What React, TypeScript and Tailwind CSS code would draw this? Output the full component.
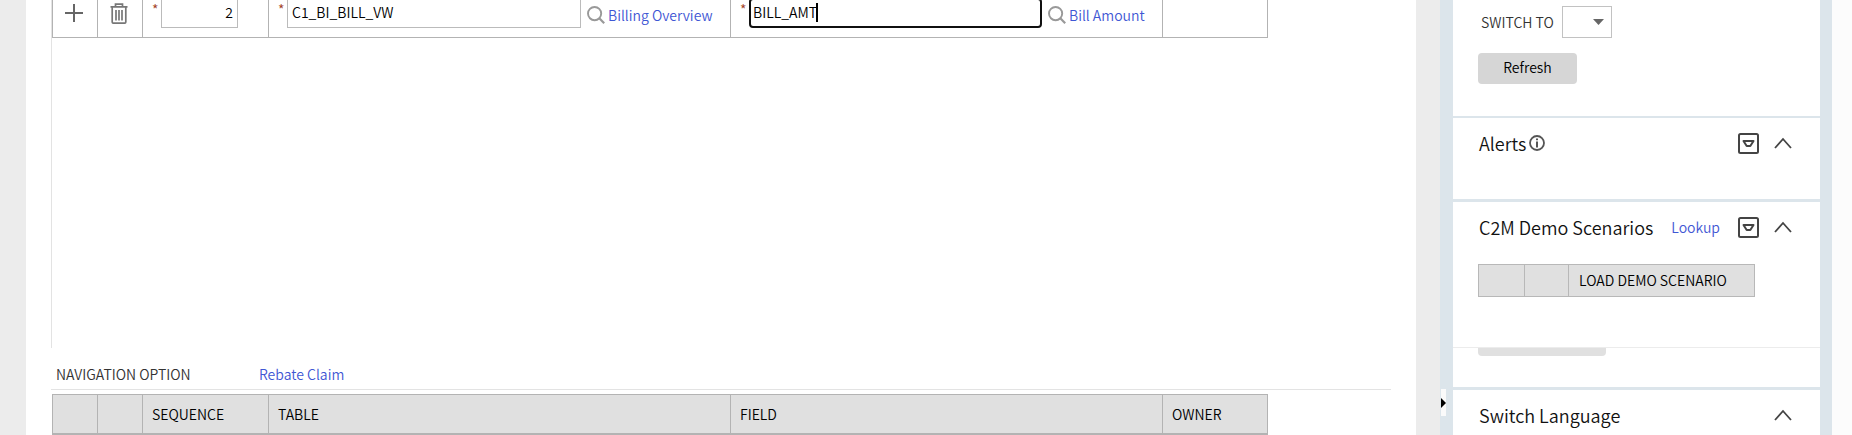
import type { ReactNode } from "react";

const headings = ["", "", "SEQUENCE", "TABLE", "FIELD", "OWNER"];

function Columns() {
  return (
    <colgroup>
      <col className="w-[45px]" />
      <col className="w-[45px]" />
      <col className="w-[126px]" />
      <col className="w-[462px]" />
      <col className="w-[432px]" />
      <col className="w-[105px]" />
    </colgroup>
  );
}

function SearchIcon() {
  return (
    <svg viewBox="0 0 18 18" className="size-[18px]" fill="none" stroke="#999" aria-hidden="true">
      <circle cx="7.6" cy="7.6" r="6.6" strokeWidth="1.9" />
      <path d="M12.3 12.3 17.2 17.2" strokeWidth="2.2" />
    </svg>
  );
}

function Lookup({ label, text }: { label: string; text: string }) {
  return (
    <>
      <button aria-label={label} className="ml-1.5 mt-1">
        <SearchIcon />
      </button>
      <a href="#" className="ml-[3px] mt-1 text-[#3f57d4]">
        {text}
      </a>
    </>
  );
}

function Star() {
  return <span className="w-[9px] shrink-0 self-start pt-px text-[#a03c1e]">*</span>;
}

function Chevron() {
  return (
    <svg viewBox="0 0 18 12" className="h-3 w-[18px]" fill="none" stroke="#444" strokeWidth="1.8" aria-hidden="true">
      <path d="M1 11 9 2l8 9" />
    </svg>
  );
}

function MenuIcon() {
  return (
    <svg viewBox="0 0 21 21" className="size-[21px]" fill="none" stroke="#444" aria-hidden="true">
      <rect x="1" y="1" width="19" height="19" rx="1.5" strokeWidth="2" />
      <path d="M5.5 8h10l-3.2 5H8.7z" strokeWidth="2" strokeLinejoin="round" />
    </svg>
  );
}

function ZoneHeader({ title, menu, children }: { title: string; menu?: boolean; children?: ReactNode }) {
  return (
    <div className="flex h-[50px] items-center pl-[26px] pr-[28px]">
      <h2 className="text-lg font-[350] leading-6 text-[#111]">{title}</h2>
      {children}
      <div className="ml-auto flex items-center gap-[15px]">
        {menu && (
          <button aria-label={`${title} menu`}>
            <MenuIcon />
          </button>
        )}
        <button aria-label={`Collapse ${title}`}>
          <Chevron />
        </button>
      </div>
    </div>
  );
}

export default function App() {
  const cell = "border-r border-b border-[#b3b3b3] p-0";
  return (
    <div className="flex h-screen overflow-hidden bg-[#ececec] font-['Noto_Sans_CJK_SC',sans-serif] text-sm font-[350] leading-5 text-black">
      <main className="ml-[26px] mr-6 min-w-0 flex-1 overflow-hidden bg-white pl-[25px] pr-[25px]">
        <section className="h-[348px] overflow-hidden border-l border-[#e3e3e3]">
          <table className="-mt-[11px] w-[1216px] table-fixed border-separate border-spacing-0 border-l border-[#b3b3b3]">
            <Columns />
            <tbody>
              <tr className="h-[49px]">
                <td className="border-r border-b border-[#b3b3b3] py-0 pl-0 pr-0.5">
                  <button aria-label="Add row" className="mx-auto block">
                    <svg viewBox="0 0 18 18" className="size-[18px]" stroke="#666" strokeWidth="2" aria-hidden="true">
                      <path d="M9 0v18M0 9h18" />
                    </svg>
                  </button>
                </td>
                <td className="border-r border-b border-[#b3b3b3] py-0 pl-0 pr-0.5">
                  <button aria-label="Delete row" className="mx-auto block">
                    <svg viewBox="0 0 18 21" className="h-[21px] w-[18px]" fill="none" stroke="#777" strokeWidth="1.7" aria-hidden="true">
                      <path d="M0.5 3.8h17M5.5 3.5V1.2h7v2.3M2.2 4v15q0 1.2 1.2 1.2h11.2q1.2 0 1.2-1.2V4M6 7v10.5M9 7v10.5M12 7v10.5" />
                    </svg>
                  </button>
                </td>
                <td className={cell}>
                  <div className="flex h-[30px] items-center px-[9px]">
                    <Star />
                    <input aria-label="Sequence" defaultValue="2" className="h-[30px] w-[77px] border border-[#bbb] px-1 pb-0.5 text-right" />
                  </div>
                </td>
                <td className={cell}>
                  <div className="flex h-[30px] items-center px-[9px]">
                    <Star />
                    <input aria-label="Table" defaultValue="C1_BI_BILL_VW" className="h-[30px] w-[294px] border border-[#bbb] px-1 pb-0.5" />
                    <Lookup label="Search tables" text="Billing Overview" />
                  </div>
                </td>
                <td className={cell}>
                  <div className="flex h-[30px] items-center px-[9px]">
                    <Star />
                    <div className="relative">
                      <input
                        aria-label="Field"
                        defaultValue="BILL_AMT"
                        className="block h-[30px] w-[293px] rounded border-2 border-[#101010] px-0.5 pb-0.5"
                      />
                      <span className="absolute left-[67px] top-[5px] h-[19px] w-[2px] bg-black" />
                    </div>
                    <Lookup label="Search fields" text="Bill Amount" />
                  </div>
                </td>
                <td className={cell} />
              </tr>
            </tbody>
          </table>
        </section>

        <section>
          <div className="flex h-[42px] items-center border-b border-[#e3e3e3] pl-[5px] pt-2.5">
            <span className="w-[203px] text-[#333]">NAVIGATION OPTION</span>
            <a href="#" className="text-[#3f57d4]">
              Rebate Claim
            </a>
          </div>
          <table className="ml-px mt-1 w-[1216px] table-fixed border-separate border-spacing-0 border-l border-t border-[#b3b3b3] bg-[#e0e0e0]">
            <Columns />
            <thead>
              <tr className="h-10">
                {headings.map((h, i) => (
                  <th key={i} className="border-b-2 border-r border-[#b3b3b3] px-[9px] py-0 text-left font-[350]">
                    {h}
                  </th>
                ))}
              </tr>
            </thead>
          </table>
        </section>
      </main>

      <aside className="relative w-[392px] shrink-0 border-l-[13px] border-r-[12px] border-[#dce5eb] bg-white">
        <button aria-label="Collapse dashboard" className="absolute -left-3 top-[389px] flex h-[27px] w-[5px] items-center bg-[#fafafa]">
          <svg viewBox="0 0 5 10" className="h-2.5 w-[5px]" aria-hidden="true">
            <path d="M0 0 5 5 0 10z" fill="#000" />
          </svg>
        </button>

        <section className="h-[118px] border-b-2 border-[#dce5eb] pt-1.5">
          <div className="flex items-center pl-7">
            <label htmlFor="switch-to" className="w-[81px] text-[#333]">
              SWITCH TO
            </label>
            <div className="relative">
              <select id="switch-to" className="block h-8 w-[50px] appearance-none border border-[#c2c2c2] bg-white">
                <option value=""></option>
              </select>
              <svg viewBox="0 0 11 6" className="pointer-events-none absolute right-2 top-[13px] h-1.5 w-[11px]" aria-hidden="true">
                <path d="M0 0h11L5.5 6z" fill="#666" />
              </svg>
            </div>
          </div>
          <button className="ml-[25px] mt-[15px] h-[31px] w-[99px] rounded bg-[#d6d6d6] pb-1">Refresh</button>
        </section>

        <section className="h-[84px] border-b-3 border-[#dce5eb]">
          <ZoneHeader title="Alerts" menu>
            <svg viewBox="0 0 16 16" className="ml-[3px] size-4" fill="none" stroke="#555" aria-label="Alerts information" role="img">
              <circle cx="8" cy="8" r="7" strokeWidth="1.8" />
              <path d="M8 3.4v1.8M8 6.5v6" strokeWidth="2" />
            </svg>
          </ZoneHeader>
        </section>

        <section className="h-[146px] border-b border-[#ececec]">
          <ZoneHeader title="C2M Demo Scenarios" menu>
            <a href="#" className="ml-[18px] text-[#3f57d4]">
              Lookup
            </a>
          </ZoneHeader>
          <table className="ml-[25px] mt-3 w-[277px] table-fixed border-separate border-spacing-0 border-l border-t border-[#b8b8b8] bg-[#e0e0e0]">
            <colgroup>
              <col className="w-[46px]" />
              <col className="w-11" />
              <col />
            </colgroup>
            <thead>
              <tr className="h-8">
                <th className="border-b border-r border-[#b8b8b8] p-0" />
                <th className="border-b border-r border-[#b8b8b8] p-0" />
                <th className="border-b border-r border-[#b8b8b8] px-2.5 pb-0.5 pt-0 text-left font-[350]">LOAD DEMO SCENARIO</th>
              </tr>
            </thead>
          </table>
        </section>

        <section className="h-[42px] border-b-3 border-[#dce5eb]">
          <div className="ml-[25px] h-2 w-32 rounded-b bg-[#e0e0e0]" />
        </section>

        <section>
          <ZoneHeader title="Switch Language" />
        </section>
      </aside>
      <div className="w-5 shrink-0 bg-[#fcfcfc]" />
    </div>
  );
}
